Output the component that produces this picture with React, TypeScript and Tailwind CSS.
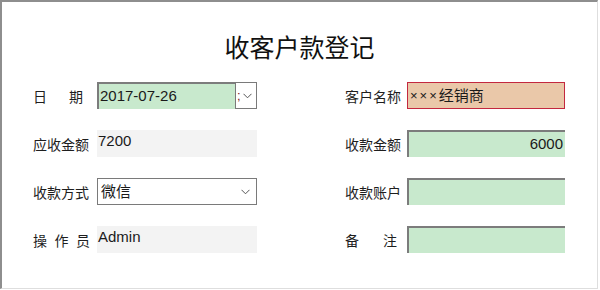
const cjk = "font-['Noto_Sans_CJK_SC','Noto_Sans',sans-serif]";
const field = "font-['Liberation_Sans','Noto_Sans_CJK_SC',sans-serif] text-[15px] text-[#1a1a1a]";

function Chevron() {
  return (
    <svg width="9" height="6" viewBox="0 0 9 6" className="shrink-0">
      <polyline points="0.5,0.8 4.5,4.8 8.5,0.8" fill="none" stroke="#555" strokeWidth="1" />
    </svg>
  );
}

// spread labels like "日　期" are justified over a fixed width
function Label({ chars, width = "w-[56px]" }: { chars: string[]; width?: string }) {
  if (chars.length === 4) {
    return (
      <div className={`${width} whitespace-nowrap text-[14px] leading-[18px] text-[#1e1e1e] ${cjk}`}>
        {chars.join("")}
      </div>
    );
  }
  return (
    <div className={`${width} flex justify-between text-[14px] leading-[18px] text-[#1e1e1e] ${cjk}`}>
      {chars.map((c, i) => (
        <span key={i}>{c}</span>
      ))}
    </div>
  );
}

const sunken = "border-t-2 border-l-2 border-t-[#7c7c7c] border-l-[#7c7c7c] bg-[#c8e9cd]";

export default function App() {
  return (
    <div className="w-[600px] h-[290px] bg-white">
      <div className="w-[598px] h-[289px] border-t-2 border-l-2 border-r border-b border-t-[#8e8e8e] border-l-[#8e8e8e] border-r-[#dedede] border-b-[#dedede]">
        <div className={`pt-[26px] h-[62px] text-center text-[25px] leading-[36px] text-[#111] ${cjk}`}>
          收客户款登记
        </div>
        <div className="mt-[18px] pl-[31px] flex gap-[88px]">
          {/* left column */}
          <div className="w-[224px] flex flex-col gap-[21px]">
            <div className="h-[27px] flex items-center">
              <div className="w-[56px]">
                <Label chars={["日", "期"]} width="w-[50px]" />
              </div>
              <div className={`ml-[8px] w-[138px] h-[27px] flex items-center pl-[1px] ${sunken} ${field}`}>
                2017-07-26
              </div>
              <div className="w-[22px] h-[27px] border border-[#7a7a7a] bg-white flex items-center">
                <span className="ml-[1px] w-[4px] overflow-hidden text-[13px] leading-none text-[#7a2020] font-['Liberation_Sans',sans-serif]">;</span>
                <span className="ml-[2px]">
                  <Chevron />
                </span>
              </div>
            </div>
            <div className="h-[27px] flex items-center">
              <Label chars={["应", "收", "金", "额"]} />
              <div className={`ml-[8px] w-[160px] h-[27px] bg-[#f3f3f3] pl-[1px] leading-[22px] ${field}`}>
                7200
              </div>
            </div>
            <div className="h-[27px] flex items-center">
              <Label chars={["收", "款", "方", "式"]} />
              <div className={`ml-[8px] w-[160px] h-[27px] border border-[#7a7a7a] bg-white flex items-center justify-between pl-[3px] pr-[6px] ${field}`}>
                <span className={cjk}>微信</span>
                <Chevron />
              </div>
            </div>
            <div className="h-[27px] flex items-center">
              <Label chars={["操", "作", "员"]} width="w-[57px]" />
              <div className={`ml-[7px] w-[160px] h-[27px] bg-[#f3f3f3] pl-[1px] leading-[22px] ${field}`}>
                Admin
              </div>
            </div>
          </div>

          {/* right column */}
          <div className="w-[220px] flex flex-col gap-[21px]">
            <div className="h-[27px] flex items-center">
              <Label chars={["客", "户", "名", "称"]} />
              <div className={`ml-[6px] w-[158px] h-[27px] border border-[#c3283f] bg-[#eac8a9] flex items-center pl-[2px] ${field}`}>
                <span className="text-[13px] tracking-[2px]">×××</span>
                <span className={cjk}>经销商</span>
              </div>
            </div>
            <div className="h-[27px] flex items-center">
              <Label chars={["收", "款", "金", "额"]} />
              <div className={`ml-[6px] w-[158px] h-[27px] flex items-center justify-end pr-[2px] ${sunken} ${field}`}>
                6000
              </div>
            </div>
            <div className="h-[27px] flex items-center">
              <Label chars={["收", "款", "账", "户"]} />
              <div className={`ml-[6px] w-[158px] h-[27px] ${sunken}`} />
            </div>
            <div className="h-[27px] flex items-center">
              <div className="w-[56px]">
                <Label chars={["备", "注"]} width="w-[52px]" />
              </div>
              <div className={`ml-[6px] w-[158px] h-[27px] ${sunken}`} />
            </div>
          </div>
        </div>
      </div>
    </div>
  );
}
